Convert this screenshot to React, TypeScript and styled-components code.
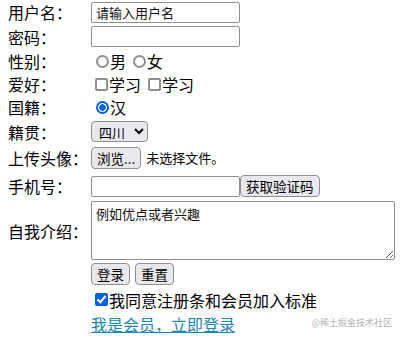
import React from 'react';
import styled, { createGlobalStyle } from 'styled-components';

const GlobalStyle = createGlobalStyle`
  html, body {
    margin: 0;
    padding: 0;
    background: #ffffff;
  }
  body {
    font-family: "Noto Sans CJK SC", "Noto Sans", sans-serif;
    font-size: 16px;
    color: #000000;
  }
`;

const Page = styled.div`
  position: relative;
  width: 402px;
  height: 338px;
  overflow: hidden;
`;

const Form = styled.form`
  display: grid;
  grid-template-columns: 83px 1fr;
  grid-template-rows: 24px 25px 24px 22px 24px 25px 28px 28px 61px 26px 25px 24px;
  align-items: center;
  padding-left: 8px;
`;

const Label = styled.label`
  font-size: 16px;
  line-height: 20px;
  white-space: nowrap;
`;

const Cell = styled.div<{ $gap?: number }>`
  display: flex;
  align-items: center;
  gap: ${({ $gap }) => $gap ?? 0}px;
  font-size: 16px;
  line-height: 20px;
`;

const TextInput = styled.input`
  box-sizing: border-box;
  width: 149px;
  height: 21px;
  margin: 0;
  padding: 0 4px;
  border: 1px solid #8f8f8f;
  border-radius: 2px;
  font-family: "Noto Sans CJK SC", sans-serif;
  font-size: 13px;
  color: #111;
  outline: none;
  &::placeholder {
    color: #333;
  }
`;

const Choice = styled.span`
  display: inline-flex;
  align-items: center;
`;

const Radio = styled.input.attrs({ type: 'radio' })`
  appearance: none;
  box-sizing: border-box;
  width: 13px;
  height: 13px;
  margin: 0 1px 0 5px;
  border: 2px solid #8f8f8f;
  border-radius: 50%;
  background: #fff;
  &:checked {
    border-color: #0060df;
    background: radial-gradient(circle, #0060df 0 3px, #fff 3.5px);
  }
`;

const Check = styled.input.attrs({ type: 'checkbox' })`
  appearance: none;
  box-sizing: border-box;
  width: 13px;
  height: 13px;
  margin: 0 1px 0 4px;
  border: 2px solid #8f8f8f;
  border-radius: 2px;
  background: #fff;
  position: relative;
  &:checked {
    border-color: #0060df;
    background: #0060df;
  }
  &:checked::after {
    content: '';
    position: absolute;
    left: 2px;
    top: -1px;
    width: 3px;
    height: 7px;
    border: solid #fff;
    border-width: 0 2px 2px 0;
    transform: rotate(40deg);
  }
`;

const Select = styled.select`
  box-sizing: border-box;
  width: 57px;
  height: 21px;
  margin: 0;
  padding: 0 0 0 3px;
  border: 1px solid #8f8f8f;
  border-radius: 4px;
  background: #e9e9ed;
  font-family: "Noto Sans CJK SC", sans-serif;
  font-size: 13px;
  color: #000;
`;

const Button = styled.button`
  box-sizing: border-box;
  height: 22px;
  margin: 0;
  padding: 0 5px;
  border: 1px solid #8f8f8f;
  border-radius: 4px;
  background: #e9e9ed;
  font-family: "Noto Sans CJK SC", sans-serif;
  font-size: 13.5px;
  line-height: 18px;
  color: #000;
`;

const FileNote = styled.span`
  font-size: 13px;
  margin-left: 5px;
`;

const TextArea = styled.textarea`
  box-sizing: border-box;
  width: 304px;
  height: 59px;
  margin: 0;
  padding: 2px 4px;
  border: 1px solid #8f8f8f;
  border-radius: 2px;
  font-family: "Noto Sans CJK SC", sans-serif;
  font-size: 13px;
  color: #111;
  &::placeholder {
    color: #333;
  }
`;

const Agree = styled.span`
  font-size: 16px;
`;

const MemberLink = styled.a`
  color: #1b87ab;
  text-decoration: underline;
  font-size: 16px;
`;

const Watermark = styled.span`
  position: absolute;
  right: 10px;
  bottom: 9px;
  font-family: "Noto Sans CJK SC", sans-serif;
  font-size: 9px;
  color: #b5b5b5;
`;

export default function App() {
  return (
    <Page>
      <GlobalStyle />
      <Form onSubmit={e => e.preventDefault()}>
        <Label>用户名：</Label>
        <Cell>
          <TextInput defaultValue="请输入用户名" />
        </Cell>

        <Label>密码：</Label>
        <Cell>
          <TextInput type="password" />
        </Cell>

        <Label>性别：</Label>
        <Cell $gap={2}>
          <Choice><Radio name="sex" />男</Choice>
          <Choice><Radio name="sex" />女</Choice>
        </Cell>

        <Label>爱好：</Label>
        <Cell $gap={3}>
          <Choice><Check />学习</Choice>
          <Choice><Check />学习</Choice>
        </Cell>

        <Label>国籍：</Label>
        <Cell>
          <Choice><Radio name="nation" defaultChecked />汉</Choice>
        </Cell>

        <Label>籍贯：</Label>
        <Cell>
          <Select defaultValue="四川">
            <option>四川</option>
            <option>北京</option>
          </Select>
        </Cell>

        <Label>上传头像：</Label>
        <Cell>
          <Button type="button">浏览...</Button>
          <FileNote>未选择文件。</FileNote>
        </Cell>

        <Label>手机号：</Label>
        <Cell>
          <TextInput />
          <Button type="button">获取验证码</Button>
        </Cell>

        <Label>自我介绍：</Label>
        <Cell>
          <TextArea defaultValue="例如优点或者兴趣" />
        </Cell>

        <span />
        <Cell $gap={5}>
          <Button type="submit">登录</Button>
          <Button type="reset">重置</Button>
        </Cell>

        <span />
        <Cell>
          <Check defaultChecked />
          <Agree>我同意注册条和会员加入标准</Agree>
        </Cell>

        <span />
        <Cell>
          <MemberLink href="#">我是会员，立即登录</MemberLink>
        </Cell>
      </Form>
      <Watermark>@稀土掘金技术社区</Watermark>
    </Page>
  );
}
